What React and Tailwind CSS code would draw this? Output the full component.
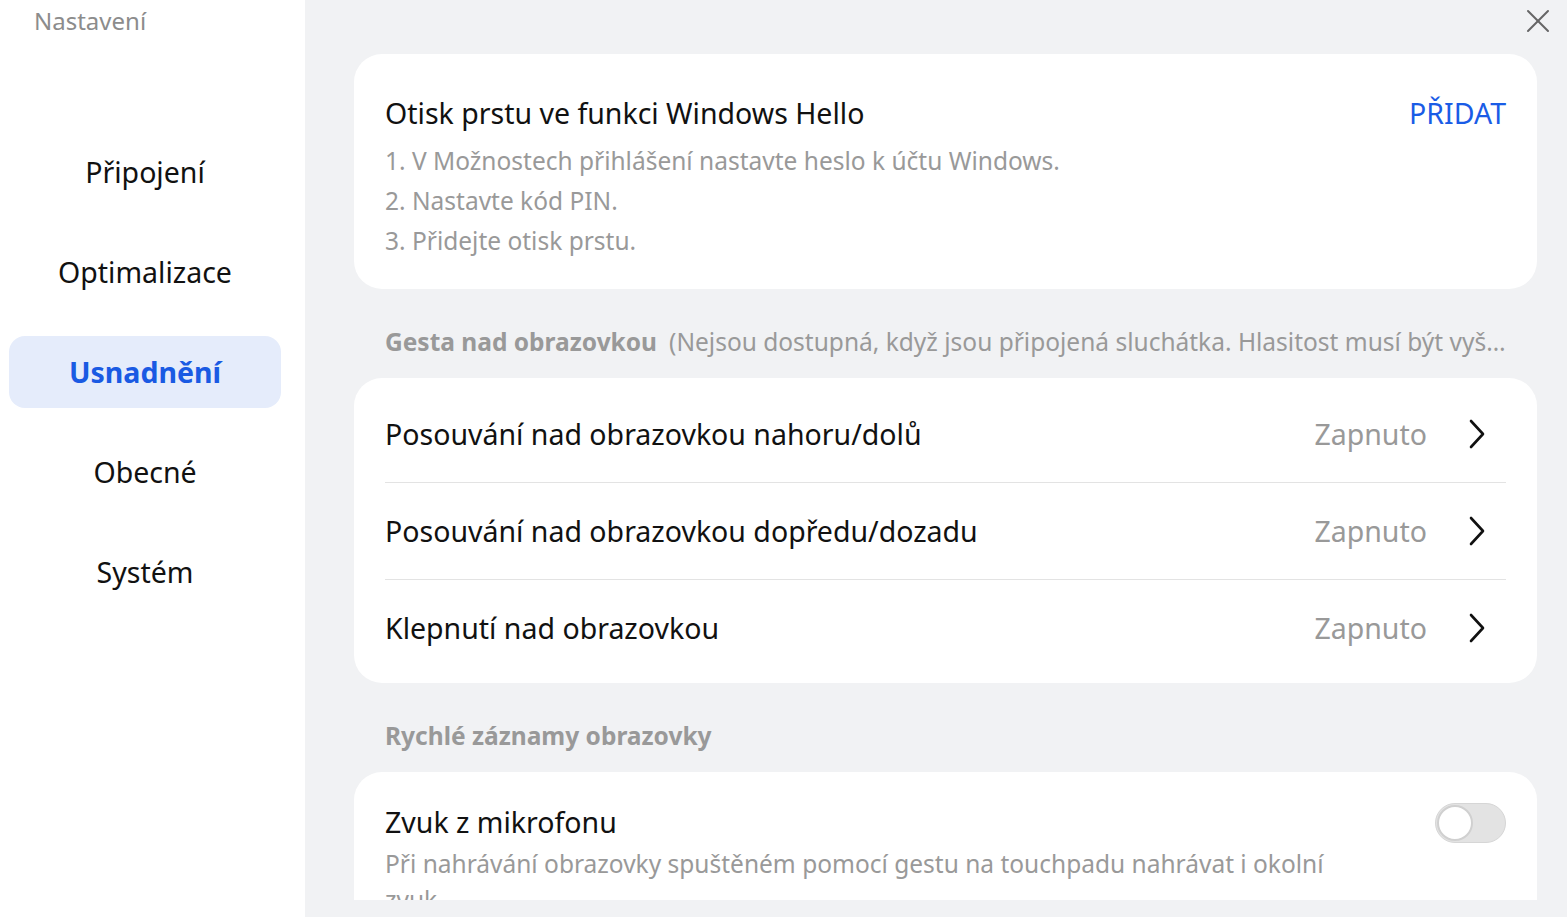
import { X } from 'lucide-react';

const navItems = ['Připojení', 'Optimalizace', 'Usnadnění', 'Obecné', 'Systém'];

const gestures = [
  'Posouvání nad obrazovkou nahoru/dolů',
  'Posouvání nad obrazovkou dopředu/dozadu',
  'Klepnutí nad obrazovkou',
];

function Chevron() {
  return (
    <svg width="18" height="30" viewBox="0 0 18 30" fill="none">
      <polyline points="3,2 15,15 3,28" stroke="#111" strokeWidth="2.6" strokeLinecap="round" strokeLinejoin="round" />
    </svg>
  );
}

export default function App() {
  return (
    <div className="flex h-[917px] w-full overflow-hidden bg-[#f1f2f4] text-[#111] font-['Noto_Sans',sans-serif]">
      {/* Sidebar */}
      <aside className="w-[305px] shrink-0 bg-white">
        <div className="pl-[34px] pt-[4px] text-[24px] leading-[34px] text-[#8c8c8c]">Nastavení</div>
        <nav className="mt-[98px] flex flex-col gap-[28px] pl-[9px]">
          {navItems.map((item) => (
            <div
              key={item}
              className={`flex h-[72px] w-[272px] items-center justify-center rounded-[16px] text-[28.5px] ${
                item === 'Usnadnění' ? 'bg-[#e5ecfb] font-bold text-[#1a5ae3]' : 'text-[#111]'
              }`}
            >
              {item}
            </div>
          ))}
        </nav>
      </aside>

      {/* Main */}
      <main className="relative min-w-0 flex-1">
        <button className="absolute right-[9px] top-[1px] text-[#666]" aria-label="Zavřít">
          <X size={40} strokeWidth={1.2} />
        </button>
        <div className="h-[900px] overflow-hidden pl-[49px] pr-[30px] pt-[54px]">
          {/* Windows Hello card */}
          <section className="rounded-[28px] bg-white px-[31px] pb-[28px] pt-[40px]">
            <div className="flex items-center justify-between">
              <h2 className="text-[28.5px] leading-[38px]">Otisk prstu ve funkci Windows Hello</h2>
              <button className="text-[28.5px] leading-[38px] text-[#1a5ce6]">PŘIDAT</button>
            </div>
            <ol className="mt-[9px] text-[24.5px] leading-[40px] text-[#999]">
              <li>1. V Možnostech přihlášení nastavte heslo k účtu Windows.</li>
              <li>2. Nastavte kód PIN.</li>
              <li>3. Přidejte otisk prstu.</li>
            </ol>
          </section>

          <div className="mt-[37px] mb-[20px] truncate px-[31px] text-[24.5px] leading-[32px] text-[#999]">
            <span className="font-bold">Gesta nad obrazovkou</span>
            <span className="ml-[12px]">(Nejsou dostupná, když jsou připojená sluchátka. Hlasitost musí být vyšší než 0.)</span>
          </div>

          {/* Gestures card */}
          <section className="rounded-[28px] bg-white px-[31px] pb-[7px] pt-[8px]">
            {gestures.map((g, i) => (
              <div key={g} className={i > 0 ? 'border-t border-[#e3e3e3]' : ''}>
                <div className="flex h-[96px] items-center">
                  <span className="flex-1 text-[28.5px]">{g}</span>
                  <span className="text-[28.5px] text-[#999]">Zapnuto</span>
                  <span className="ml-[41px] mr-[20px]">
                    <Chevron />
                  </span>
                </div>
              </div>
            ))}
          </section>

          <div className="mt-[37px] mb-[20px] px-[31px] text-[24.5px] font-bold leading-[32px] text-[#999]">
            Rychlé záznamy obrazovky
          </div>

          {/* Recording card */}
          <section className="rounded-[28px] bg-white px-[31px] pb-[30px] pt-[31px]">
            <div className="flex items-start">
              <div className="flex-1">
                <div className="text-[28.5px] leading-[38px]">Zvuk z mikrofonu</div>
                <p className="mt-[5px] max-w-[960px] text-[24.5px] leading-[36px] text-[#999]">
                  Při nahrávání obrazovky spuštěném pomocí gestu na touchpadu nahrávat i okolní zvuk
                </p>
              </div>
              <div className="flex h-[40px] w-[71px] items-center rounded-full border border-[#d6d6d6] bg-[#e3e3e3] px-[1px]">
                <div className="h-[36px] w-[36px] rounded-full border-2 border-[#d0d0d0] bg-white" />
              </div>
            </div>
          </section>
        </div>
      </main>
    </div>
  );
}
